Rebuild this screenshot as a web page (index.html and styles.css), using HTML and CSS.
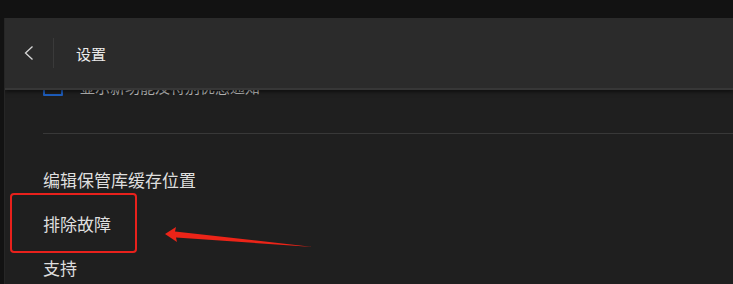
FILE: index.html
```html
<!DOCTYPE html>
<html lang="zh-CN">
<head>
<meta charset="utf-8">
<title>设置</title>
<link rel="stylesheet" href="styles.css">
</head>
<body>
<div class="app">
  <div class="window">
    <div class="content">
      <div class="check-row">
        <span class="checkbox"></span>
        <span class="check-label">显示新功能及特别优惠通知</span>
      </div>
      <div class="separator"></div>
      <div class="item">编辑保管库缓存位置</div>
      <div class="item">排除故障</div>
      <div class="item">支持</div>
    </div>
    <header class="header">
      <div class="back">
        <svg width="10" height="16" viewBox="0 0 10 16"><polyline points="8.5,1.5 1.5,8 8.5,14.5" fill="none" stroke="#d8d8d8" stroke-width="1.3"/></svg>
      </div>
      <div class="divider"></div>
      <div class="title">设置</div>
    </header>
    <div class="highlight"></div>
    <svg class="arrow" width="160" height="30" viewBox="0 0 160 30">
      <polygon points="2,9 13,2 12,6.5 150,22 13,12.5 14,17" fill="#ec2418"/>
    </svg>
  </div>
</div>
</body>
</html>
```
FILE: styles.css
```css
html, body {
  margin: 0;
  padding: 0;
  background: #121212;
  font-family: "Noto Sans CJK SC", "Noto Sans", sans-serif;
}
.app {
  width: 733px;
  height: 284px;
  padding: 18px 0 0 4px;
  box-sizing: border-box;
  overflow: hidden;
}
.window {
  position: relative;
  height: 266px;
  background: #1f1f1f;
  border-left: 1px solid #262626;
  overflow: hidden;
}
.content {
  padding: 58px 0 0 38px;
}
.check-row {
  display: flex;
  align-items: center;
  height: 20px;
}
.checkbox {
  width: 16px;
  height: 16px;
  border: 2px solid #1e5fc0;
  border-radius: 1px;
}
.check-label {
  margin-left: 17px;
  font-size: 15px;
  color: #bdbdbd;
}
.separator {
  margin-top: 37px;
  height: 1px;
  background: #383838;
  margin-bottom: 24px;
}
.item {
  height: 44px;
  line-height: 44px;
  font-size: 17px;
  color: #dedede;
}
.header {
  position: absolute;
  top: 0;
  left: 0;
  right: 0;
  height: 70px;
  background: #2b2b2b;
  border-bottom: 2px solid #373737;
  box-shadow: 0 2px 4px rgba(0, 0, 0, 0.55);
  display: flex;
  align-items: center;
}
.back {
  width: 48px;
  display: flex;
  justify-content: center;
  align-items: center;
}
.back svg {
  display: block;
}
.divider {
  width: 1px;
  height: 30px;
  background: #3a3a3a;
}
.title {
  margin-left: 22px;
  font-size: 15px;
  color: #ececec;
}
.highlight {
  position: absolute;
  left: 5px;
  top: 175px;
  width: 123px;
  height: 56px;
  border: 2px solid #e8211c;
  border-radius: 4px;
}
.arrow {
  position: absolute;
  left: 158px;
  top: 207px;
}
```
